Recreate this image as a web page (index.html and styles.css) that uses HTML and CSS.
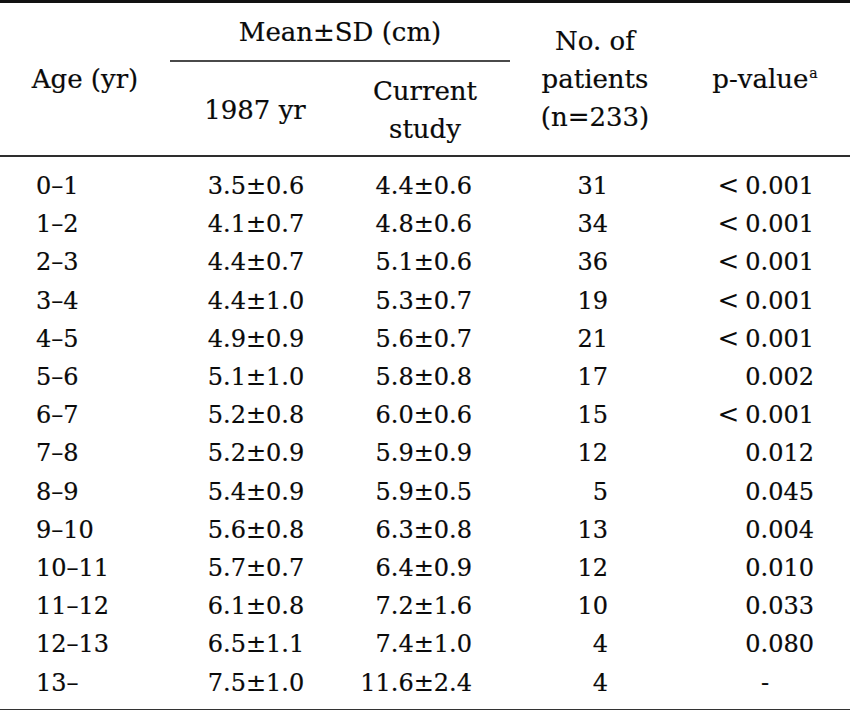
FILE: index.html
```html
<!DOCTYPE html>
<html lang="en">
<head>
<meta charset="utf-8">
<title>Table</title>
<link rel="stylesheet" href="styles.css">
</head>
<body>
<table class="data">
  <colgroup>
    <col class="c1"><col class="c2"><col class="c3"><col class="c4"><col class="c5">
  </colgroup>
  <thead>
    <tr class="h1">
      <th rowspan="2">Age (yr)</th>
      <th colspan="2" class="group">Mean±SD (cm)</th>
      <th rowspan="2">No. of<br>patients<br>(n=233)</th>
      <th rowspan="2">p-value<sup>a</sup></th>
    </tr>
    <tr class="h2">
      <th>1987 yr</th>
      <th>Current<br>study</th>
    </tr>
  </thead>
  <tbody>
    <tr class="first"><td class="age">0–1</td><td class="old">3.5±0.6</td><td class="cur">4.4±0.6</td><td class="n">31</td><td class="p"><span class="lt">&lt;</span>0.001</td></tr>
    <tr><td class="age">1–2</td><td class="old">4.1±0.7</td><td class="cur">4.8±0.6</td><td class="n">34</td><td class="p"><span class="lt">&lt;</span>0.001</td></tr>
    <tr><td class="age">2–3</td><td class="old">4.4±0.7</td><td class="cur">5.1±0.6</td><td class="n">36</td><td class="p"><span class="lt">&lt;</span>0.001</td></tr>
    <tr><td class="age">3–4</td><td class="old">4.4±1.0</td><td class="cur">5.3±0.7</td><td class="n">19</td><td class="p"><span class="lt">&lt;</span>0.001</td></tr>
    <tr><td class="age">4–5</td><td class="old">4.9±0.9</td><td class="cur">5.6±0.7</td><td class="n">21</td><td class="p"><span class="lt">&lt;</span>0.001</td></tr>
    <tr><td class="age">5–6</td><td class="old">5.1±1.0</td><td class="cur">5.8±0.8</td><td class="n">17</td><td class="p">0.002</td></tr>
    <tr><td class="age">6–7</td><td class="old">5.2±0.8</td><td class="cur">6.0±0.6</td><td class="n">15</td><td class="p"><span class="lt">&lt;</span>0.001</td></tr>
    <tr><td class="age">7–8</td><td class="old">5.2±0.9</td><td class="cur">5.9±0.9</td><td class="n">12</td><td class="p">0.012</td></tr>
    <tr><td class="age">8–9</td><td class="old">5.4±0.9</td><td class="cur">5.9±0.5</td><td class="n">5</td><td class="p">0.045</td></tr>
    <tr><td class="age">9–10</td><td class="old">5.6±0.8</td><td class="cur">6.3±0.8</td><td class="n">13</td><td class="p">0.004</td></tr>
    <tr><td class="age">10–11</td><td class="old">5.7±0.7</td><td class="cur">6.4±0.9</td><td class="n">12</td><td class="p">0.010</td></tr>
    <tr><td class="age">11–12</td><td class="old">6.1±0.8</td><td class="cur">7.2±1.6</td><td class="n">10</td><td class="p">0.033</td></tr>
    <tr><td class="age">12–13</td><td class="old">6.5±1.1</td><td class="cur">7.4±1.0</td><td class="n">4</td><td class="p">0.080</td></tr>
    <tr class="last"><td class="age">13–</td><td class="old">7.5±1.0</td><td class="cur">11.6±2.4</td><td class="n">4</td><td class="p dash">-</td></tr>
  </tbody>
</table>
</body>
</html>
```
FILE: styles.css
```css
html, body {
  margin: 0;
  padding: 0;
  background: #ffffff;
}

body {
  font-family: "DejaVu Serif", "Liberation Serif", serif;
  font-size: 24px;
  color: #0a0a0a;
  -webkit-text-stroke: 0.2px #0a0a0a;
}

.data {
  width: 850px;
  border-collapse: collapse;
  table-layout: fixed;
  border-top: 3px solid #111;
  border-bottom: 2px solid #333;
}

.c1, .c2, .c3, .c4, .c5 {
  width: 170px;
}

.data th {
  font-weight: normal;
  font-size: 26px;
  text-align: center;
  vertical-align: middle;
  padding: 0;
  line-height: 38px;
}

.h1 th.group {
  height: 56px;
  border-bottom: 2px solid #4a4a4a;
  line-height: 30px;
  padding-top: 1px;
}

.h2 th {
  height: 91px;
  padding-top: 2px;
}

thead {
  border-bottom: 2px solid #2e2e2e;
}

.data th sup {
  font-size: 14px;
  line-height: 0;
  vertical-align: 10px;
  margin-left: 1px;
}

.data td {
  padding: 0;
  height: 38.2px;
  line-height: 30px;
  vertical-align: middle;
  white-space: nowrap;
}

.data tr.first td {
  padding-top: 10px;
}

.data tr.last td {
  padding-bottom: 7px;
}

.age {
  text-align: left;
  padding-left: 36px !important;
}

.old {
  text-align: center;
  padding-left: 2px !important;
}

.cur {
  text-align: right;
  padding-right: 38px !important;
}

.n {
  text-align: right;
  padding-right: 72px !important;
}

.p {
  text-align: right;
  padding-right: 36px !important;
}

.p.dash {
  text-align: center;
  padding-right: 0 !important;
  padding-left: 0 !important;
}

.lt {
  font-size: 26px;
  line-height: 0;
  margin-right: 6px;
  -webkit-text-stroke: 0;
}
```
